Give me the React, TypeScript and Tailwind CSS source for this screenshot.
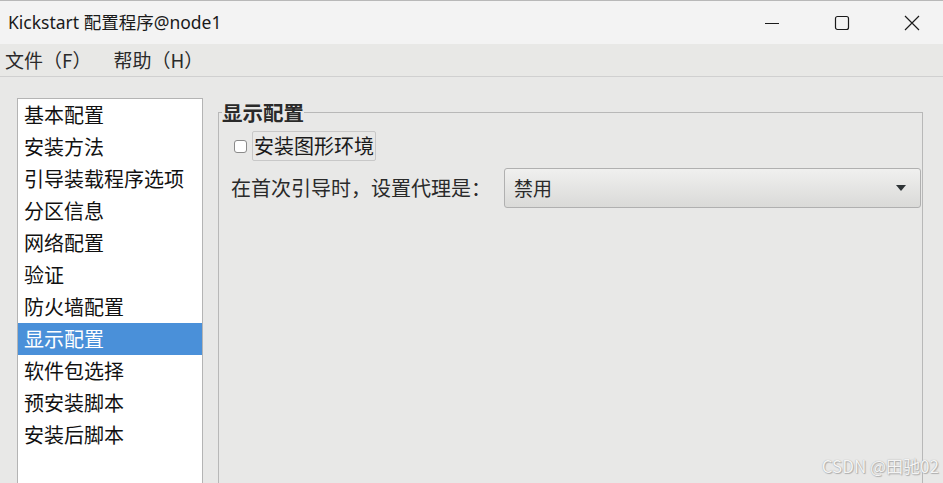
const CJK = '"Noto Sans CJK SC", "Noto Sans", sans-serif';

const items = [
  '基本配置',
  '安装方法',
  '引导装载程序选项',
  '分区信息',
  '网络配置',
  '验证',
  '防火墙配置',
  '显示配置',
  '软件包选择',
  '预安装脚本',
  '安装后脚本',
];

function TitleBar() {
  return (
    <div className="h-[44px] bg-[#f3f3f3] border-t border-[#b8b8b8] flex items-center shrink-0">
      <span className="pl-[8px] text-[17.5px] text-[#1a1a1a]" style={{ fontFamily: '"Noto Sans", "Noto Sans CJK SC", sans-serif' }}>
        Kickstart 配置程序@node1
      </span>
      <div className="ml-auto -mr-[4px] flex items-center h-full">
        <div className="w-[70px] h-full flex items-center justify-center">
          <svg width="16" height="16" viewBox="0 0 16 16">
            <path d="M1 8.5h14" stroke="#1a1a1a" strokeWidth="1" />
          </svg>
        </div>
        <div className="w-[70px] h-full flex items-center justify-center">
          <svg width="16" height="16" viewBox="0 0 16 16">
            <rect x="1.5" y="1.5" width="13" height="13" rx="2" fill="none" stroke="#1a1a1a" strokeWidth="1.2" />
          </svg>
        </div>
        <div className="w-[70px] h-full flex items-center justify-center">
          <svg width="16" height="16" viewBox="0 0 16 16">
            <path d="M1 1l14 14M15 1L1 15" stroke="#1a1a1a" strokeWidth="1.2" />
          </svg>
        </div>
      </div>
    </div>
  );
}

function MenuBar() {
  return (
    <div
      className="h-[33px] bg-[#e8e8e6] border-b border-[#d0d0d0] flex items-center text-[19px] text-[#2a2a2a] shrink-0"
      style={{ fontFamily: CJK }}
    >
      <span className="pl-[5px]">文件（F）</span>
      <span className="pl-[22px]">帮助（H）</span>
    </div>
  );
}

export default function App() {
  return (
    <div className="w-[943px] h-[483px] overflow-hidden flex flex-col bg-[#e8e8e7] relative">
      <TitleBar />
      <MenuBar />
      <div className="flex-1 flex pt-[21px] pl-[17px] min-h-0" style={{ fontFamily: CJK }}>
        <div className="w-[186px] bg-white border border-[#b4b4b4] shrink-0 h-[400px]">
          {items.map((it) => (
            <div
              key={it}
              className={
                it === '显示配置'
                  ? 'h-[32px] flex items-center pl-[6px] text-[20px] bg-[#4a90d9] text-white'
                  : 'h-[32px] flex items-center pl-[6px] text-[20px] text-[#111111]'
              }
            >
              {it}
            </div>
          ))}
        </div>
        <fieldset className="ml-[15px] w-[705px] h-[400px] border border-[#b8b8b8] mt-[3px] px-0 pt-0">
          <legend className="ml-[3px] px-0 text-[20.5px] font-bold text-[#2a2a2a] leading-[22px]">显示配置</legend>
          <div className="flex items-center pl-[15px] mt-[8px]">
            <span className="w-[13px] h-[13px] border border-[#8a8a8a] rounded-[3px] bg-white" />
            <span className="ml-[5px] border border-[#c8c8c8] rounded-[2px] px-[1px] h-[30px] flex items-center text-[20px] text-[#1a1a1a]">
              安装图形环境
            </span>
          </div>
          <div className="flex items-center pl-[12px] mt-[7px] pr-[1px]">
            <span className="text-[20px] text-[#2a2a2a] w-[273px]">在首次引导时，设置代理是：</span>
            <div className="flex-1 h-[40px] border border-[#b0b0b0] rounded-[3px] bg-gradient-to-b from-[#f0f0ef] to-[#dadad8] flex items-center pl-[9px] pr-[14px]">
              <span className="text-[19px] text-[#2a2a2a]">禁用</span>
              <svg className="ml-auto" width="10" height="6" viewBox="0 0 10 6">
                <path d="M0 0h10L5 6z" fill="#2e3436" />
              </svg>
            </div>
          </div>
        </fieldset>
      </div>
      <div
        className="absolute right-[4px] bottom-[5px] text-[17px] text-[#f4f4f4]"
        style={{ fontFamily: CJK, textShadow: '0 0 1px #9a9a9a, 1px 1px 1px #b0b0b0' }}
      >
        CSDN @田驰02
      </div>
    </div>
  );
}
